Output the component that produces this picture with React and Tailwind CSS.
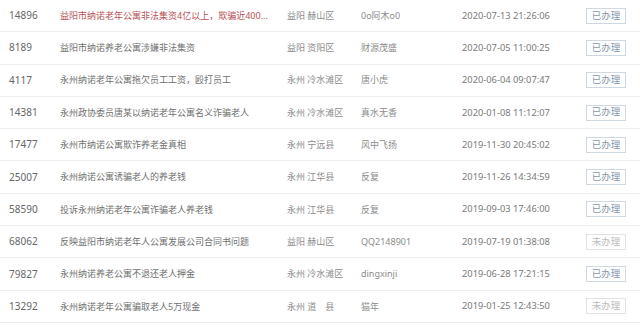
import React from 'react';

const rows = [
    { id: '14896', title: '益阳市纳诺老年公寓非法集资4亿以上，欺骗近400...', area: '益阳 赫山区', user: '0o阿木o0', time: '2020-07-13 21:26:06', done: true, hot: true },
    { id: '8189', title: '益阳市纳诺养老公寓涉嫌非法集资', area: '益阳 资阳区', user: '财源茂盛', time: '2020-07-05 11:00:25', done: true },
    { id: '4117', title: '永州纳诺老年公寓拖欠员工工资，殴打员工', area: '永州 冷水滩区', user: '唐小虎', time: '2020-06-04 09:07:47', done: true },
    { id: '14381', title: '永州政协委员唐某以纳诺老年公寓名义诈骗老人', area: '永州 冷水滩区', user: '真水无香', time: '2020-01-08 11:12:07', done: true },
    { id: '17477', title: '永州市纳诺公寓欺诈养老金真相', area: '永州 宁远县', user: '风中飞扬', time: '2019-11-30 20:45:02', done: true },
    { id: '25007', title: '永州纳诺公寓诱骗老人的养老钱', area: '永州 江华县', user: '反复', time: '2019-11-26 14:34:59', done: true },
    { id: '58590', title: '投诉永州纳诺老年公寓诈骗老人养老钱', area: '永州 江华县', user: '反复', time: '2019-09-03 17:46:00', done: true },
    { id: '68062', title: '反映益阳市纳诺老年人公寓发展公司合同书问题', area: '益阳 赫山区', user: 'QQ2148901', time: '2019-07-19 01:38:08', done: false },
    { id: '79827', title: '永州纳诺养老公寓不退还老人押金', area: '永州 冷水滩区', user: 'dingxinji', time: '2019-06-28 17:21:15', done: true },
    { id: '13292', title: '永州纳诺老年公寓骗取老人5万现金', area: '永州 道　县', user: '猫年', time: '2019-01-25 12:43:50', done: false },
];

const App = () => {
    return (
        <div
            className="w-[640px] h-[327px] bg-white overflow-hidden text-[9px] text-[#707070]"
            style={{ fontFamily: '"Noto Sans", "Noto Sans CJK SC", sans-serif' }}
        >
            {rows.map((row) => (
                <div key={row.id} className="flex items-center h-[32.3px] border-b border-[#eeeeee]">
                    <div className="w-[60px] pl-[9px] text-[10px] text-[#666]">{row.id}</div>
                    <div className={`w-[227px] whitespace-nowrap ${row.hot ? 'text-[#b85055]' : ''}`}>{row.title}</div>
                    <div className="w-[74px] whitespace-nowrap text-[#8c8c8c]">{row.area}</div>
                    <div className="w-[101px] whitespace-nowrap text-[#8c8c8c]">{row.user}</div>
                    <div className="w-[124px] whitespace-nowrap text-[9.3px] text-[#7a7a7a]">{row.time}</div>
                    <div
                        className={`w-[40px] h-[16px] flex items-center justify-center border text-[9.5px] ${
                            row.done
                                ? 'border-[#cfd9e4] text-[#8596ac]'
                                : 'border-[#e2e2e2] text-[#bbbbbb]'
                        }`}
                    >
                        {row.done ? '已办理' : '未办理'}
                    </div>
                </div>
            ))}
        </div>
    );
};

export default App;
